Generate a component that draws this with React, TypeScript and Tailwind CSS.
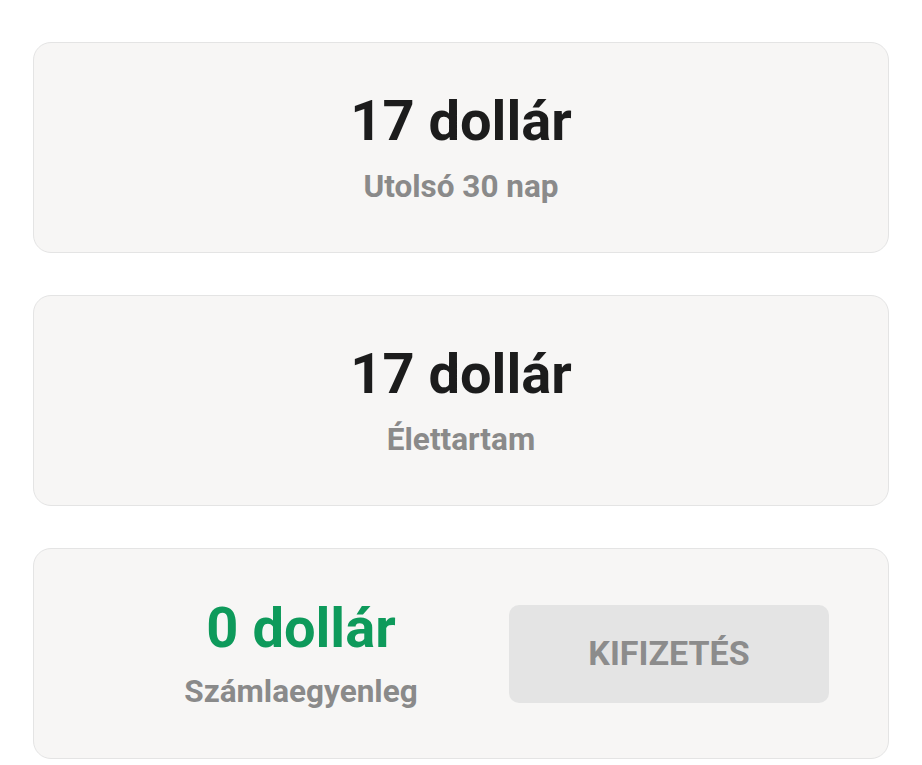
import React from 'react'

const font = { fontFamily: "Roboto, 'Noto Sans', sans-serif" }

function StatCard({ value, label }: { value: string; label: string }) {
  return (
    <div className="flex h-[211px] flex-col items-center justify-center rounded-[18px] border border-[#e4e4e4] bg-[#f7f6f5]">
      <div className="text-[56px] font-bold leading-none text-[#1c1c1c]">{value}</div>
      <div className="mt-[22px] text-[31.5px] font-bold leading-none text-[#8a8a8a]">{label}</div>
    </div>
  )
}

export default function App() {
  return (
    <div className="min-h-screen bg-white" style={font}>
      <div className="flex flex-col gap-[42px] px-[33px] pt-[42px] pb-[6px]">
        <StatCard value="17 dollár" label="Utolsó 30 nap" />
        <StatCard value="17 dollár" label="Élettartam" />

        {/* Balance card */}
        <div className="flex h-[211px] items-center rounded-[18px] border border-[#e4e4e4] bg-[#f7f6f5] px-[59px]">
          <div className="flex flex-1 flex-col items-center">
            <div className="text-[56px] font-bold leading-none text-[#0e9a5b]">0 dollár</div>
            <div className="mt-[20px] text-[31.5px] font-bold leading-none text-[#8a8a8a]">Számlaegyenleg</div>
          </div>
          <button
            className="flex h-[98px] w-[320px] items-center justify-center rounded-[10px] bg-[#e4e4e4] text-[34px] font-bold text-[#8c8c8c]"
            disabled
          >
            KIFIZETÉS
          </button>
        </div>
      </div>
    </div>
  )
}
